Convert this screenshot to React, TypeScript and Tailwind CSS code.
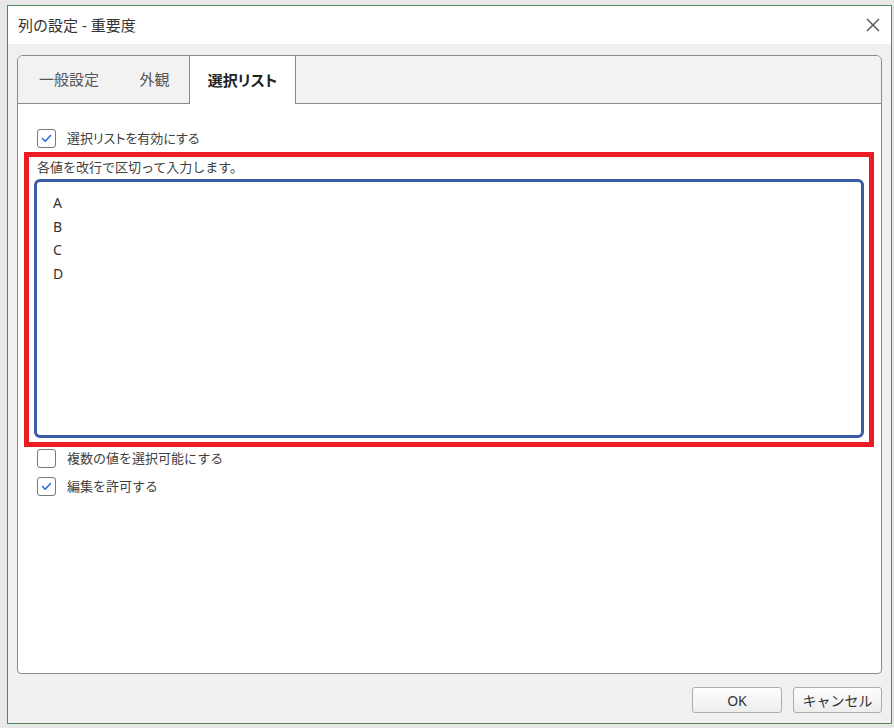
import React from 'react';

const font = "font-['Noto_Sans','Noto_Sans_CJK_JP',sans-serif]";

function CheckBox({ checked, label, tight }: { checked: boolean; label: string; tight?: boolean }) {
  return (
    <div className="flex items-center pl-[19px] h-[19px]">
      <div className="w-[19px] h-[19px] border border-[#7a7a7a] rounded-[3px] bg-white flex items-center justify-center shrink-0">
        {checked && (
          <svg width="11" height="9" viewBox="0 0 11 9" fill="none">
            <path d="M1.5 4.5 L4.2 7.2 L9.5 1.5" stroke="#2b6fd8" strokeWidth="1.6" strokeLinecap="round" strokeLinejoin="round" />
          </svg>
        )}
      </div>
      <span className={tight ? "ml-[11px] text-[13px] leading-[19px] text-[#404040] [font-feature-settings:'palt']" : 'ml-[11px] text-[13px] leading-[19px] text-[#404040]'}>
        {label}
      </span>
    </div>
  );
}

export default function App() {
  return (
    <div className={`min-h-[728px] bg-[#e8e8e8] pt-[5px] pl-[7px] ${font}`}>
      <div className="w-[885px] h-[719px] border border-[#4f8a57] bg-[#f0f0f0] flex flex-col">
        {/* Title bar */}
        <div className="h-[38px] shrink-0 bg-white flex items-center justify-between pl-[10px] pr-[11px]">
          <span className="text-[15px] text-[#333]">列の設定 - 重要度</span>
          <svg width="14" height="14" viewBox="0 0 14 14" fill="none">
            <path d="M1 1 L13 13 M13 1 L1 13" stroke="#5a5a5a" strokeWidth="1.5" />
          </svg>
        </div>

        <div className="flex-1 flex flex-col px-[9px] pt-[11px] pb-[10px]">
          {/* Tab control */}
          <div className="flex-1 flex flex-col border border-[#8a8a8a] rounded-t-[6px] rounded-b-[4px] overflow-hidden bg-white">
            <div className="h-[48px] shrink-0 flex bg-[#f2f2f2] border-b border-[#8a8a8a]">
              <div className="w-[102px] flex items-center justify-center text-[15px] text-[#555]">一般設定</div>
              <div className="w-[69px] flex items-center justify-center text-[15px] text-[#555]">外観</div>
              <div className="w-[107px] h-[48px] bg-white border-x border-[#8a8a8a] flex items-center justify-center text-[15px] font-bold text-[#222] [font-feature-settings:'palt']">
                選択リスト
              </div>
            </div>

            <div className="flex-1 flex flex-col pt-[25px]">
              <CheckBox checked tight label="選択リストを有効にする" />

              <div className="ml-[6px] mt-[4px] w-[850px] h-[295px] border-[5px] border-[#ed1c24] flex flex-col">
                <div className="h-[22px] pl-[8px] text-[13px] leading-[20px] text-[#404040]">各値を改行で区切って入力します。</div>
                <textarea
                  defaultValue={'A\nB\nC\nD'}
                  className="ml-[5px] w-[830px] h-[259px] border-[3px] border-[#3a5ba8] rounded-[6px] pl-[16px] pt-[9px] text-[14px] leading-[23.5px] text-[#333] resize-none outline-none bg-white"
                />
              </div>

              <div className="mt-[2px] flex flex-col gap-[9px]">
                <CheckBox checked={false} label="複数の値を選択可能にする" />
                <CheckBox checked label="編集を許可する" />
              </div>
            </div>
          </div>

          {/* Buttons */}
          <div className="mt-[13px] h-[26px] shrink-0 flex justify-end gap-[11px]">
            <button className="w-[90px] h-[26px] border border-[#adadad] rounded-[3px] bg-gradient-to-b from-[#fdfdfd] to-[#ededed] text-[14px] text-[#333]">
              OK
            </button>
            <button className="w-[89px] h-[26px] border border-[#adadad] rounded-[3px] bg-gradient-to-b from-[#fdfdfd] to-[#ededed] text-[14px] text-[#333]">
              キャンセル
            </button>
          </div>
        </div>
      </div>
    </div>
  );
}
